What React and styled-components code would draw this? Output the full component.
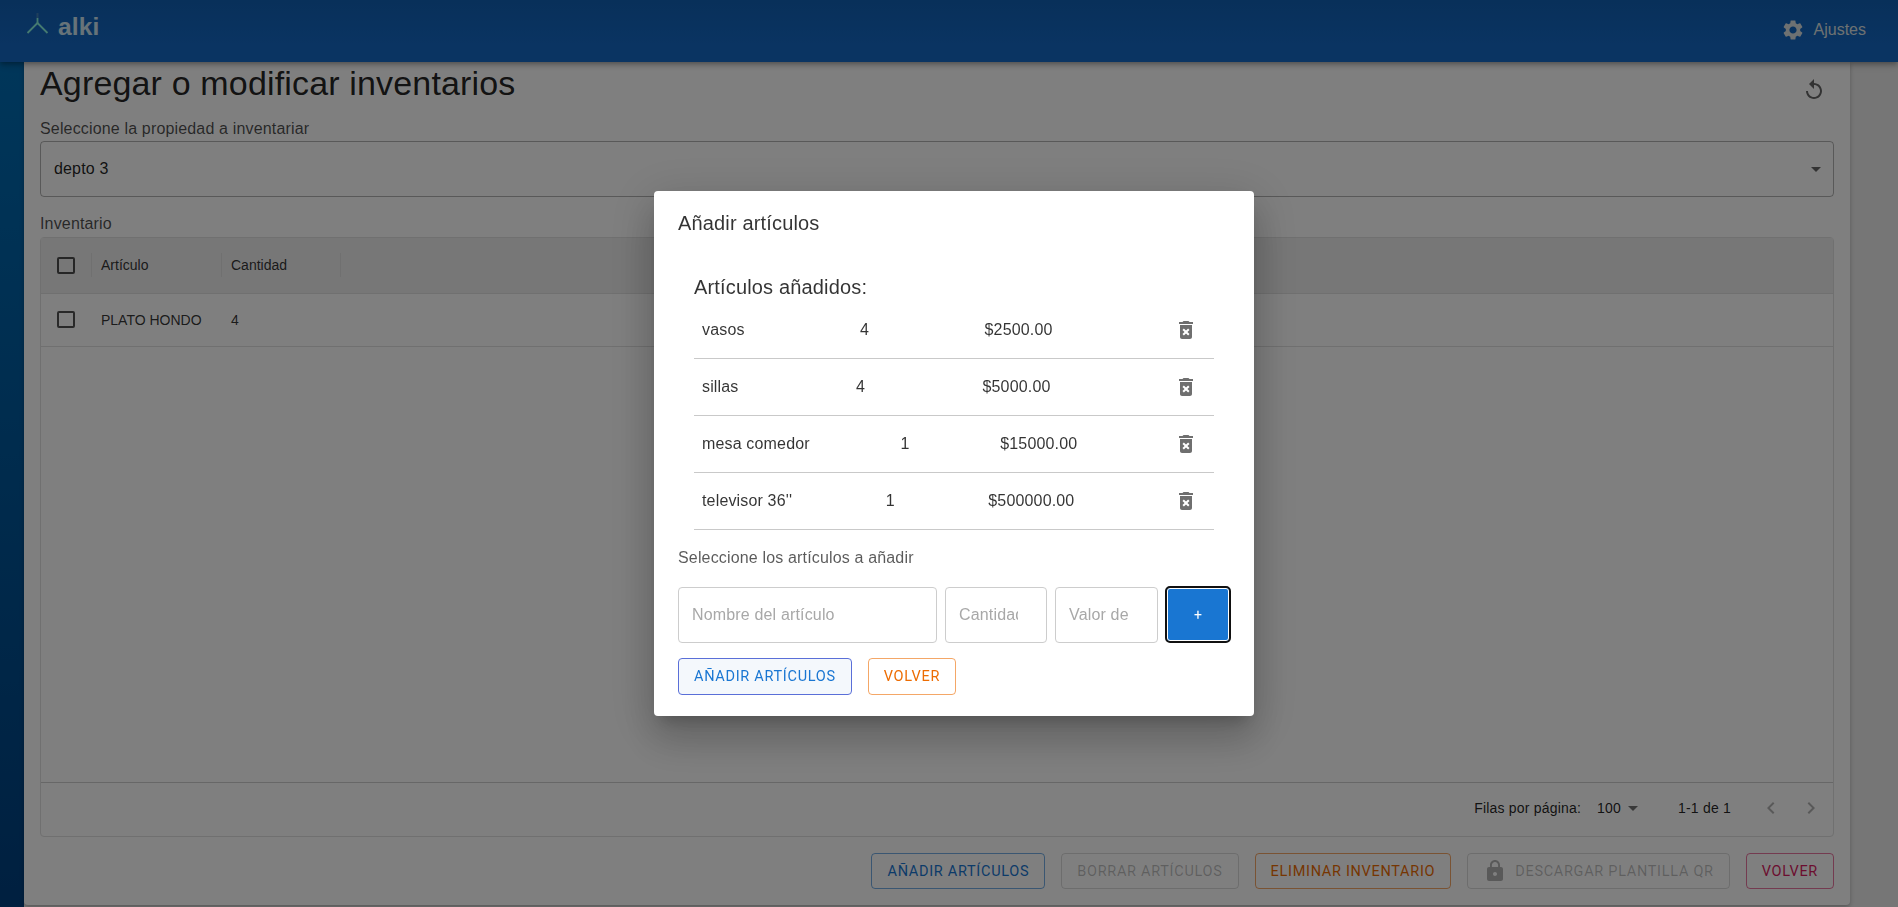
import React from "react";
import styled, { createGlobalStyle } from "styled-components";

const Global = createGlobalStyle`
  html, body { margin: 0; padding: 0; height: 100%; overflow: hidden; }
  body { font-family: "Liberation Sans", Arial, sans-serif; color: rgba(0,0,0,.87); background: #fff; letter-spacing: .01em; }
  * { box-sizing: border-box; }
`;

const Page = styled.div`
  width: 1898px;
  height: 907px;
  display: flex;
  flex-direction: column;
  overflow: hidden;
  background: linear-gradient(180deg, #0070b8 0%, #004080 100%) 0 0 / 24px 100% no-repeat, #ececec;
`;
const AppBar = styled.header`
  height: 62px;
  flex: none;
  display: flex;
  align-items: center;
  justify-content: space-between;
  padding: 0 32px 0 25px;
  background: linear-gradient(180deg, #1160b4 0%, #1468c4 70%, #1468c4 100%);
  box-shadow: 0 2px 4px -1px rgba(0,0,0,.2), 0 4px 5px 0 rgba(0,0,0,.14), 0 1px 10px 0 rgba(0,0,0,.12);
  position: relative;
  z-index: 1;
`;
const Brand = styled.div`
  display: flex;
  align-items: center;
  gap: 9px;
  color: #cfe6f2;
  font-size: 24.5px;
  font-weight: 700;
  margin-bottom: 8px;
`;
const Settings = styled.div`
  display: flex;
  align-items: center;
  gap: 9px;
  color: #dde2e4;
  font-size: 16px;
  letter-spacing: 0;
  margin-bottom: 3px;
`;
const Main = styled.main`
  flex: 1;
  display: flex;
  flex-direction: column;
  width: 1826px;
  height: 843px;
  margin-left: 24px;
  padding: 0 16px;
  background: #fff;
  border-radius: 0 0 4px 4px;
  box-shadow: 0 2px 4px rgba(0,0,0,.25);
  margin-bottom: 2px;
`;
const TitleRow = styled.div`
  height: 42px;
  display: flex;
  align-items: flex-start;
  justify-content: space-between;
  padding-right: 8px;
`;
const ReplayWrap = styled.span`
  display: flex;
  margin-top: 16px;
  color: rgba(0,0,0,.6);
`;
const Title = styled.h1`
  margin: 0;
  font-size: 34px;
  font-weight: 400;
  line-height: 42px;
  color: rgba(0,0,0,.87);
`;
const FieldLabel = styled.div`
  font-size: 16px;
  line-height: 20px;
  color: rgba(0,0,0,.7);
  margin-top: ${(p) => p.$top || 0}px;
`;
const SelectBox = styled.div`
  height: 56px;
  margin-top: 2px;
  padding: 0 13px;
  display: flex;
  align-items: center;
  justify-content: space-between;
  border: 1px solid rgba(0,0,0,.3);
  border-radius: 4px;
  font-size: 16px;
`;
const Caret = styled.span`
  width: 0;
  height: 0;
  border-left: 5px solid transparent;
  border-right: 5px solid transparent;
  border-top: 5px solid rgba(0,0,0,.6);
  margin-right: -1px;
`;
const Table = styled.section`
  height: 600px;
  margin-top: 3px;
  display: flex;
  flex-direction: column;
  border: 1px solid #e0e0e0;
  border-radius: 4px;
`;
const HeadRow = styled.div`
  height: 56px;
  flex: none;
  display: flex;
  align-items: center;
  background: #eeeeee;
  border-bottom: 1px solid #e0e0e0;
  font-size: 14px;
  padding-bottom: 1px;
`;
const BodyRow = styled(HeadRow)`
  height: 53px;
  background: transparent;
`;
const CheckCell = styled.div`
  width: 50px;
  display: flex;
  justify-content: center;
`;
const Check = styled.span`
  width: 18px;
  height: 17px;
  border: 2px solid rgba(0,0,0,.68);
  border-radius: 2px;
`;
const Cell = styled.div`
  width: ${(p) => p.$w}px;
  height: 24px;
  display: flex;
  align-items: center;
  padding-left: 9px;
  color: rgba(0,0,0,.8);
  letter-spacing: 0;
  border-left: 1px solid ${(p) => (p.$rule ? "#e0e0e0" : "transparent")};
  &:last-child { border-right: 1px solid ${(p) => (p.$rule ? "#e0e0e0" : "transparent")}; }
`;
const TableFill = styled.div`
  flex: 1;
`;
const TableFoot = styled.div`
  height: 54px;
  flex: none;
  display: flex;
  align-items: center;
  justify-content: flex-end;
  padding: 0 10px 3px 0;
  border-top: 1px solid #cfcfcf;
  font-size: 14px;
  letter-spacing: .2px;
`;
const PageSize = styled.div`
  display: flex;
  align-items: center;
  gap: 7px;
  margin-left: 16px;
  margin-right: 40px;
`;
const SmallCaret = styled(Caret)`
  margin: 0;
  border-top-color: rgba(0,0,0,.55);
`;
const PagerIcon = styled.span`
  display: flex;
  margin-left: ${(p) => p.$gap}px;
  color: rgba(0,0,0,.3);
`;
const Actions = styled.div`
  margin-top: 16px;
  display: flex;
  justify-content: flex-end;
  gap: 16px;
`;
const tones = {
  blue: ["#1976d2", "rgba(25,118,210,.6)"],
  orange: ["#ed6c02", "rgba(237,108,2,.6)"],
  pink: ["#d81b60", "rgba(216,27,96,.6)"],
  off: ["rgba(0,0,0,.26)", "rgba(0,0,0,.14)"],
};
const Btn = styled.button`
  height: ${(p) => p.$h || 36}px;
  padding: 0 15px;
  display: inline-flex;
  align-items: center;
  justify-content: center;
  gap: 8px;
  font-family: Roboto, sans-serif;
  font-size: 14.5px;
  font-weight: 400;
  letter-spacing: .7px;
  white-space: nowrap;
  color: ${(p) => tones[p.$tone][0]};
  background: ${(p) => p.$bg || "transparent"};
  border: 1px solid ${(p) => p.$line || tones[p.$tone][1]};
  border-radius: 4px;
`;
const Overlay = styled.div`
  position: fixed;
  inset: 0;
  z-index: 5;
  background: rgba(0,0,0,.5);
  display: flex;
  align-items: center;
  justify-content: center;
  padding-left: 10px;
`;
const Dialog = styled.div`
  width: 600px;
  height: 525px;
  padding: 20px 24px 0;
  background: #fff;
  border-radius: 4px;
  box-shadow: 0 11px 15px -7px rgba(0,0,0,.2), 0 24px 38px 3px rgba(0,0,0,.14), 0 9px 46px 8px rgba(0,0,0,.12);
`;
const DialogTitle = styled.h2`
  margin: 0;
  font-size: 20px;
  font-weight: 400;
  line-height: 24px;
  color: rgba(0,0,0,.8);
`;
const ListBlock = styled.div`
  margin: 40px 16px 0;
  width: 520px;
`;
const ListTitle = styled.h3`
  margin: 0;
  font-size: 20px;
  font-weight: 400;
  line-height: 24px;
  color: rgba(0,0,0,.8);
`;
const ItemRow = styled.div`
  height: ${(p) => (p.$first ? 60 : 57)}px;
  padding: ${(p) => (p.$first ? 2 : 0)}px 10px 0 8px;
  display: flex;
  align-items: center;
  justify-content: space-between;
  border-bottom: 1px solid #c9c9c9;
  font-size: 16px;
  color: rgba(0,0,0,.8);
`;
const TrashBtn = styled.span`
  width: 36px;
  height: 36px;
  display: flex;
  align-items: center;
  justify-content: center;
  color: #6f6f6f;
`;
const PickLabel = styled.div`
  margin-top: 18px;
  font-size: 16px;
  line-height: 20px;
  color: rgba(0,0,0,.65);
`;
const InputRow = styled.div`
  margin-top: 19px;
  display: flex;
  align-items: stretch;
  gap: 8px;
`;
const Field = styled.input`
  flex: none;
  width: ${(p) => p.$w}px;
  height: 56px;
  padding: 0 28px 0 13px;
  font-family: "Liberation Sans", Arial, sans-serif;
  font-size: 16px;
  letter-spacing: .01em;
  border: 1px solid #cdcdcd;
  border-radius: 4px;
  background: #fff;
  &::placeholder { color: #a8a8a8; opacity: 1; }
`;
const AddBtn = styled.button`
  flex: none;
  width: 66px;
  height: 57px;
  margin: -1px 0 0 -1px;
  background: #1976d2;
  color: #fff;
  font-family: Roboto, sans-serif;
  font-size: 14px;
  border: 2px solid #111;
  border-radius: 5px;
  box-shadow: inset 0 0 0 1px #fff;
`;
const DialogActions = styled.div`
  margin-top: 15px;
  display: flex;
  gap: 16px;
`;

const Icon = ({ d, size = 24, color = "currentColor" }) => (
  <svg width={size} height={size} viewBox="0 0 24 24" fill={color} aria-hidden="true"><path d={d} /></svg>
);
const GEAR = "M19.14 12.94c.04-.3.06-.61.06-.94 0-.32-.02-.64-.07-.94l2.03-1.58c.18-.14.23-.41.12-.61l-1.92-3.32c-.12-.22-.37-.29-.59-.22l-2.39.96c-.5-.38-1.03-.7-1.62-.94l-.36-2.54c-.04-.24-.24-.41-.48-.41h-3.84c-.24 0-.43.17-.47.41l-.36 2.54c-.59.24-1.13.57-1.62.94l-2.39-.96c-.22-.08-.47 0-.59.22L2.74 8.87c-.12.21-.08.47.12.61l2.03 1.58c-.05.3-.09.63-.09.94s.02.64.07.94l-2.03 1.58c-.18.14-.23.41-.12.61l1.92 3.32c.12.22.37.29.59.22l2.39-.96c.5.38 1.03.7 1.62.94l.36 2.54c.05.24.24.41.48.41h3.84c.24 0 .44-.17.47-.41l.36-2.54c.59-.24 1.13-.56 1.62-.94l2.39.96c.22.08.47 0 .59-.22l1.92-3.32c.12-.22.07-.47-.12-.61l-2.01-1.58zM12 15.6c-1.98 0-3.6-1.62-3.6-3.6s1.62-3.6 3.6-3.6 3.6 1.62 3.6 3.6-1.62 3.6-3.6 3.6z";
const REPLAY = "M12 5V1L7 6l5 5V7c3.31 0 6 2.69 6 6s-2.69 6-6 6-6-2.69-6-6H4c0 4.42 3.58 8 8 8s8-3.58 8-8-3.58-8-8-8z";
const TRASH = "M6 19c0 1.1.9 2 2 2h8c1.1 0 2-.9 2-2V7H6v12zm2.46-7.12 1.41-1.41L12 12.59l2.12-2.12 1.41 1.41L13.41 14l2.12 2.12-1.41 1.41L12 15.41l-2.12 2.12-1.41-1.41L10.59 14l-2.13-2.12zM15.5 4l-1-1h-5l-1 1H5v2h14V4z";
const LOCK = "M18 8h-1V6c0-2.76-2.24-5-5-5S7 3.24 7 6v2H6c-1.1 0-2 .9-2 2v10c0 1.1.9 2 2 2h12c1.1 0 2-.9 2-2V10c0-1.1-.9-2-2-2zm-6 9c-1.1 0-2-.9-2-2s.9-2 2-2 2 .9 2 2-.9 2-2 2zm3.1-9H8.9V6c0-1.71 1.39-3.1 3.1-3.1 1.71 0 3.1 1.39 3.1 3.1v2z";
const LEFT = "M15.41 7.41 14 6l-6 6 6 6 1.41-1.41L10.83 12z";
const RIGHT = "M10 6 8.59 7.41 13.17 12l-4.58 4.59L10 18l6-6z";

const Logo = () => (
  <svg width="24" height="28" viewBox="0 0 24 28" fill="none" aria-hidden="true">
    <path d="M12.5 0v5" stroke="#3f7fb8" strokeWidth="2" />
    <path d="M12.5 5v5" stroke="#8af5e0" strokeWidth="1.8" />
    <path d="M12.5 10L2.5 20M12.5 10l10 10" stroke="#8af5e0" strokeWidth="1.8" />
  </svg>
);

const items = [
  ["vasos", "4", "$2500.00"],
  ["sillas", "4", "$5000.00"],
  ["mesa comedor", "1", "$15000.00"],
  ["televisor 36''", "1", "$500000.00"],
];

export default function App() {
  return (
    <Page>
      <Global />
      <AppBar>
        <Brand><Logo />alki</Brand>
        <Settings><Icon d={GEAR} size={24} />Ajustes</Settings>
      </AppBar>
      <Main>
        <TitleRow>
          <Title>Agregar o modificar inventarios</Title>
          <ReplayWrap><Icon d={REPLAY} size={24} /></ReplayWrap>
        </TitleRow>
        <FieldLabel $top={15}>Seleccione la propiedad a inventariar</FieldLabel>
        <SelectBox>depto 3<Caret /></SelectBox>
        <FieldLabel $top={17}>Inventario</FieldLabel>
        <Table>
          <HeadRow>
            <CheckCell><Check /></CheckCell>
            <Cell $w={130} $rule>Artículo</Cell>
            <Cell $w={120} $rule>Cantidad</Cell>
          </HeadRow>
          <BodyRow>
            <CheckCell><Check /></CheckCell>
            <Cell $w={130}>PLATO HONDO</Cell>
            <Cell $w={120}>4</Cell>
          </BodyRow>
          <TableFill />
          <TableFoot>
            Filas por página:
            <PageSize>100<SmallCaret /></PageSize>
            1-1 de 1
            <PagerIcon $gap={28}><Icon d={LEFT} /></PagerIcon>
            <PagerIcon $gap={16}><Icon d={RIGHT} /></PagerIcon>
          </TableFoot>
        </Table>
        <Actions>
          <Btn $tone="blue">AÑADIR ARTÍCULOS</Btn>
          <Btn $tone="off">BORRAR ARTÍCULOS</Btn>
          <Btn $tone="orange">ELIMINAR INVENTARIO</Btn>
          <Btn $tone="off"><Icon d={LOCK} size={24} color="rgba(0,0,0,.3)" />DESCARGAR PLANTILLA QR</Btn>
          <Btn $tone="pink">VOLVER</Btn>
        </Actions>
      </Main>
      <Overlay>
        <Dialog>
          <DialogTitle>Añadir artículos</DialogTitle>
          <ListBlock>
            <ListTitle>Artículos añadidos:</ListTitle>
            {items.map(([name, qty, price], i) => (
              <ItemRow key={name} $first={i === 0}>
                <span>{name}</span>
                <span>{qty}</span>
                <span>{price}</span>
                <TrashBtn><Icon d={TRASH} /></TrashBtn>
              </ItemRow>
            ))}
          </ListBlock>
          <PickLabel>Seleccione los artículos a añadir</PickLabel>
          <InputRow>
            <Field $w={259} placeholder="Nombre del artículo" />
            <Field $w={102} placeholder="Cantidad" />
            <Field $w={103} placeholder="Valor del artículo" />
            <AddBtn>+</AddBtn>
          </InputRow>
          <DialogActions>
            <Btn $tone="blue" $bg="#f4f8fc" $line="#5a6fd8" $h={37}>AÑADIR ARTÍCULOS</Btn>
            <Btn $tone="orange" $h={37}>VOLVER</Btn>
          </DialogActions>
        </Dialog>
      </Overlay>
    </Page>
  );
}
